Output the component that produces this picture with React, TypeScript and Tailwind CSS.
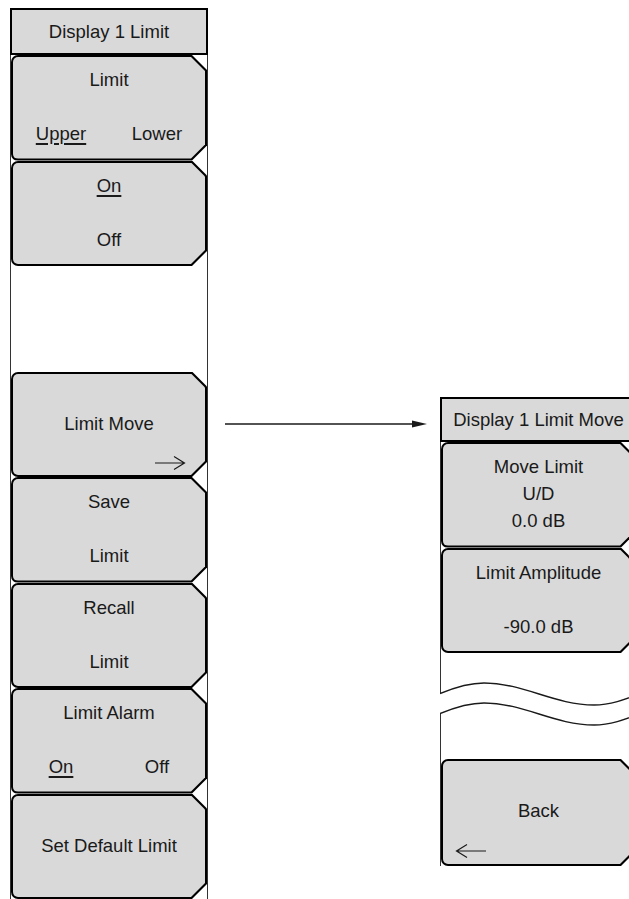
import React from 'react';

type Row = React.ReactNode;

const font = "font-['Liberation_Sans',Arial,sans-serif]";

const RightArrow = () => (
  <svg width="32" height="16" viewBox="0 0 32 16" className="block">
    <path d="M1 8 H30 M20 1.5 L30.5 8 L20 14.5" fill="none" stroke="#1a1a1a" strokeWidth="1.2" />
  </svg>
);

const LeftArrow = () => (
  <svg width="32" height="16" viewBox="0 0 32 16" className="block">
    <path d="M31 8 H2 M12 1.5 L1.5 8 L12 14.5" fill="none" stroke="#1a1a1a" strokeWidth="1.2" />
  </svg>
);

const U = ({ children }: { children: React.ReactNode }) => (
  <span className="underline decoration-[1.5px] underline-offset-[3px]">{children}</span>
);

const Pair = ({ left, right }: { left: React.ReactNode; right: React.ReactNode }) => (
  <div className="grid grid-cols-2 text-center">
    <span>{left}</span>
    <span>{right}</span>
  </div>
);

interface KeyProps {
  rows: Row[];
  arrow?: 'right' | 'left';
  h?: string;
}

const SoftKey: React.FC<KeyProps> = ({ rows, arrow, h = 'h-[105.5px]' }) => (
  <div
    className={`${h} w-full shrink-0 bg-black p-[2px] rounded-l-[7px] [clip-path:polygon(0_0,calc(100%_-_15px)_0,100%_15px,100%_calc(100%_-_15px),calc(100%_-_15px)_100%,0_100%)]`}
  >
    <div className="flex h-full flex-col bg-[#d9d9d9] pt-[9px] rounded-l-[5px] [clip-path:polygon(0_0,calc(100%_-_14px)_0,100%_14px,100%_calc(100%_-_14px),calc(100%_-_14px)_100%,0_100%)]">
      {rows.map((r, i) => (
        <div key={i} className="h-[27px] leading-[27px] text-center">
          {r}
        </div>
      ))}
      {arrow === 'right' && (
        <div className="mt-auto flex justify-end pb-[4px] pr-[19px]">
          <RightArrow />
        </div>
      )}
      {arrow === 'left' && (
        <div className="mt-auto flex justify-start pb-[5px] pl-[12px]">
          <LeftArrow />
        </div>
      )}
    </div>
  </div>
);

const Header = ({ title, h }: { title: string; h: string }) => (
  <div className={`${h} flex items-center justify-center border-2 border-black bg-[#d9d9d9] whitespace-nowrap`}>
    {title}
  </div>
);

const Wave = () => (
  <svg width="199" height="50" viewBox="-1 0 199 50" className="absolute -left-[1px] top-[27px]">
    <path
      d="M-1 13.5 C15 7 30 3 43 3 C82.6 3 113.4 25 153 25 C170 25 185 19 198 14 L198 34 C185 39 170 45 153 45 C113.4 45 82.6 23 43 23 C30 23 15 27 -1 33.5 Z"
      fill="white"
    />
    <path d="M-1 13.5 C15 7 30 3 43 3 C82.6 3 113.4 25 153 25 C170 25 185 19 198 14" fill="none" stroke="#1a1a1a" strokeWidth="1.4" />
    <path d="M-1 33.5 C15 27 30 23 43 23 C82.6 23 113.4 45 153 45 C170 45 185 39 198 34" fill="none" stroke="#1a1a1a" strokeWidth="1.4" />
  </svg>
);

export default function App() {
  return (
    <div className={`relative flex h-[899px] w-[629px] overflow-hidden bg-white text-[18.5px] text-[#1a1a1a] ${font}`}>
      {/* main menu */}
      <div className="ml-[10px] mt-[8px] flex w-[198px] shrink-0 flex-col">
        <Header title="Display 1 Limit" h="h-[47px]" />
        <div className="flex flex-col border-x border-[#333]">
          <SoftKey rows={['Limit', '', <Pair left={<U>Upper</U>} right="Lower" />]} />
          <SoftKey rows={[<U>On</U>, '', 'Off']} />
          <div className="h-[105.5px] shrink-0" />
          <SoftKey rows={['', 'Limit Move']} arrow="right" />
          <SoftKey rows={['Save', '', 'Limit']} />
          <SoftKey rows={['Recall', '', 'Limit']} />
          <SoftKey rows={['Limit Alarm', '', <Pair left={<U>On</U>} right="Off" />]} />
          <SoftKey rows={['', 'Set Default Limit', '']} />
        </div>
      </div>

      {/* link arrow */}
      <div className="w-[232px] shrink-0">
        <svg width="232" height="16" viewBox="0 0 232 16" className="mt-[416px] block">
          <line x1="17" y1="8" x2="206" y2="8" stroke="#1a1a1a" strokeWidth="1.3" />
          <path d="M204 4.5 L219 8 L204 11.5 Z" fill="#1a1a1a" />
        </svg>
      </div>

      {/* sub menu */}
      <div className="mt-[397px] flex w-[197px] shrink-0 flex-col">
        <Header title="Display 1 Limit Move" h="h-[45px]" />
        <div className="flex flex-col border-x border-[#333]">
          <SoftKey rows={['Move Limit', 'U/D', '0.0 dB']} />
          <SoftKey rows={['Limit Amplitude', '', '-90.0 dB']} />
          <div className="relative h-[106px] shrink-0">
            <Wave />
          </div>
          <SoftKey rows={['', 'Back']} arrow="left" h="h-[107px]" />
        </div>
      </div>
    </div>
  );
}
